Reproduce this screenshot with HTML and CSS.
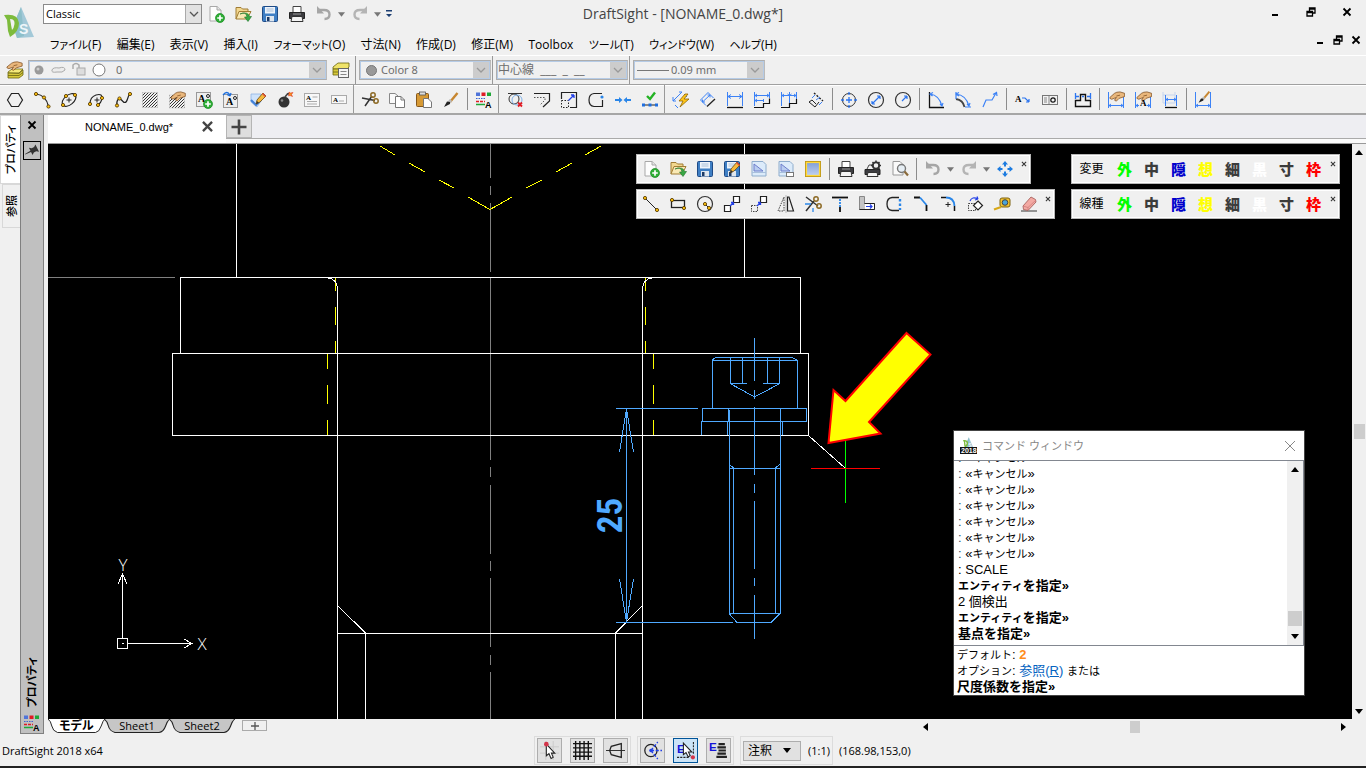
FILE: index.html
```html
<!DOCTYPE html>
<html lang="ja">
<head>
<meta charset="utf-8">
<title>DraftSight - [NONAME_0.dwg*]</title>
<link rel="stylesheet" href="styles.css">
</head>
<body>
<svg class="paints" aria-hidden="true">
  <defs>
    <linearGradient id="g-frame" x1="0" y1="0" x2="0" y2="1"><stop offset="0" stop-color="#7d9bd8"/><stop offset="1" stop-color="#c4d4f0"/></linearGradient>
    <pattern id="p-hatch" width="3" height="3" patternUnits="userSpaceOnUse"><path d="M-1 1L1-1M0 3L3 0M2 4L4 2" stroke="#222" stroke-width="0.9"/></pattern>
  </defs>
</svg>
<svg class="sprite" aria-hidden="true">
  <defs>
    <g id="hand"><path d="M1 7L6 2.500Q8 1 12 1L17 2.500V6L14 7L11 8L8 11L6 10L8 7L3 9L1 8Z" fill="#e9b77c" stroke="#7a4a1c" stroke-width="0.8"/><path d="M8 5.500L12 4.500" stroke="#7a4a1c" stroke-width="0.8"/></g>
    <g id="plus"><circle cx="13" cy="13" r="4.5" fill="#2fae36" stroke="#178a20" stroke-width="0.7"/><path d="M13 10.2V15.8M10.2 13H15.8" stroke="#fff" stroke-width="1.7"/></g>
    <g id="pencil"><path d="M7 13L8 9L14 2L17 5L11 11Z" fill="#f6b93b" stroke="#6b4a12" stroke-width="0.8"/><path d="M14 2L17 5L16 6L13 3Z" fill="#e14b3a"/><path d="M7 13L8 10L10 12Z" fill="#333"/></g>
    <g id="node"><circle r="1.6" fill="#ffc20e" stroke="#5a3d00" stroke-width="0.9"/></g>
  </defs>
  <symbol id="i-new" viewBox="0 0 18 18"><path d="M3 1.5H10L14 5V16H3Z" fill="#fdfdfd" stroke="#a8a8a8"/><path d="M10 1.5V5H14" fill="#e4e4e4" stroke="#a8a8a8"/><use href="#plus"/></symbol>
  <symbol id="i-open" viewBox="0 0 18 18"><path d="M2 14V2.5H7L8.5 4H14V7" fill="#f3d78e" stroke="#a07c34"/><path d="M2 14L5 6.5H17L13 14Z" fill="#f9e9b4" stroke="#a07c34"/><path d="M6 9Q12 6 13 12H10.5L14 16.5L17.5 11.5H15.5Q14 6 6 9Z" fill="#39a845" stroke="#1e7228" stroke-width="0.6"/></symbol>
  <symbol id="i-save" viewBox="0 0 18 18"><rect x="1.5" y="1.5" width="15" height="15" rx="1" fill="#3f7fc4" stroke="#1f4b86"/><rect x="4" y="2" width="10" height="6.5" fill="#eef4fb"/><path d="M5.5 4H12.5M5.5 6H12.5" stroke="#a9bfd8"/><rect x="5" y="11" width="8" height="5.5" fill="#dfe6ee"/><rect x="6" y="12" width="2.5" height="4" fill="#1c3a66"/></symbol>
  <symbol id="i-saveas" viewBox="0 0 18 18"><use href="#i-save" width="18" height="18"/><use href="#pencil"/></symbol>
  <symbol id="i-print" viewBox="0 0 18 18"><path d="M5 7V1.5H13V7" fill="#fff" stroke="#444"/><path d="M1.5 7.5H16.5V13.5H1.5Z" fill="#3c3c40" stroke="#222"/><path d="M4 11.5H14L15 16.5H3Z" fill="#f4f4f4" stroke="#333"/><path d="M5 9H13" stroke="#999"/></symbol>
  <symbol id="i-printset" viewBox="0 0 18 18"><path d="M1 9.5H16V14.5H1Z" fill="#3c3c40" stroke="#222"/><path d="M4 12.5H13L14 16.5H3Z" fill="#f4f4f4" stroke="#333"/><path d="M3 9L5 5H9" fill="none" stroke="#444"/><circle cx="12" cy="5.5" r="3.2" fill="none" stroke="#333" stroke-width="1.8"/><path d="M12 .5V3M12 8V10.5M7 5.5H9.5M14.5 5.5H17M8.5 2L10 3.5M14 7.5L15.5 9M15.5 2L14 3.5" stroke="#333" stroke-width="1.5"/></symbol>
  <symbol id="i-preview" viewBox="0 0 18 18"><path d="M2 1.5H9L12 4.5V15H2Z" fill="#fafafa" stroke="#999"/><circle cx="10.5" cy="8.5" r="4" fill="#e6eef4" stroke="#777" stroke-width="1.4"/><path d="M13.5 11.5L17 15.5" stroke="#8a6a3a" stroke-width="2.2"/></symbol>
  <symbol id="i-undo" viewBox="0 0 18 18"><path d="M4 5H9Q14.500 5 14.500 9.500T9.500 14" fill="none" stroke="#a6a6a6" stroke-width="2.4"/><path d="M2 1V8.500H9Z" fill="#a6a6a6"/></symbol>
  <symbol id="i-redo" viewBox="0 0 18 18"><path d="M14 5H9Q3.500 5 3.500 9.500T8.500 14" fill="none" stroke="#b4b4b4" stroke-width="2.400"/><path d="M16 1V8.500H9Z" fill="#b4b4b4"/></symbol>
  <symbol id="i-drop" viewBox="0 0 8 5"><path d="M0 0H8L4 5Z" fill="#777"/></symbol>
  <symbol id="i-custom" viewBox="0 0 6 8"><path d="M0 0H6V1.500H0ZM0 4H6L3 7Z" fill="#1d3f73"/></symbol>
  <symbol id="i-chev" viewBox="0 0 10 6"><path d="M1 1L5 5L9 1" fill="none" stroke="currentColor" stroke-width="1.300"/></symbol>
  <symbol id="i-x" viewBox="0 0 10 10"><path d="M1.500 1.500L8.500 8.500M8.500 1.500L1.500 8.500" stroke="currentColor" stroke-width="1.800"/></symbol>
  <symbol id="i-min" viewBox="0 0 10 10"><path d="M2 8H8" stroke="#000" stroke-width="2"/></symbol>
  <symbol id="i-restore" viewBox="0 0 10 10"><path d="M3.500 4V1H9V6H7M3.500 2H9" fill="none" stroke="#000" stroke-width="1.300"/><path d="M1 4.500H6.500V9H1ZM1 5.500H6.500" fill="none" stroke="#000" stroke-width="1.300"/></symbol>

  <symbol id="i-layers" viewBox="0 0 18 18"><path d="M2 11L6 8H17L13 12H2Z" fill="#f4ea7b" stroke="#6b6410" stroke-width="0.800"/><path d="M2 12L13 12.500L17 9V14L13 17H2Z" fill="#d6c93c" stroke="#6b6410" stroke-width="0.800"/><path d="M2 14.500H13L17 11.500" fill="none" stroke="#6b6410" stroke-width="0.800"/><g transform="scale(.95 .85)"><use href="#hand"/></g></symbol>
  <symbol id="i-layerstate" viewBox="0 0 18 18"><path d="M1 6L6 2H17V6L15 8H1Z" fill="#efe36a" stroke="#6b6410" stroke-width="0.800"/><path d="M1 8V14H7V8ZM1 11H7" fill="#d6c93c" stroke="#6b6410" stroke-width="0.800"/><rect x="6.500" y="7.500" width="10" height="9" fill="#f6f6f6" stroke="#666"/><path d="M8.500 10.500H14.500M8.500 13.500H14.500" stroke="#888"/></symbol>

  <symbol id="i-polygon" viewBox="0 0 18 18"><path d="M5.500 2.500H12.500L16.500 9L12.500 15.500H5.500L1.500 9Z" fill="none" stroke="#222" stroke-width="1.200"/></symbol>
  <symbol id="i-arc" viewBox="0 0 18 18"><path d="M3 3Q13 4 15.500 15.500" fill="none" stroke="#222" stroke-width="1.200"/><use href="#node" x="3" y="3"/><use href="#node" x="11" y="6.500"/><use href="#node" x="15.500" y="15.500"/></symbol>
  <symbol id="i-ellipse" viewBox="0 0 18 18"><ellipse cx="9" cy="9" rx="8" ry="4.800" transform="rotate(-40 9 9)" fill="none" stroke="#222" stroke-width="1.100"/><path d="M9 6.500V11.500M6.500 9H11.500" stroke="#222"/><use href="#node" x="3" y="14"/><use href="#node" x="15" y="4"/><use href="#node" x="6" y="5"/></symbol>
  <symbol id="i-earc" viewBox="0 0 18 18"><path d="M3 13Q3 6 9 4Q16 2 15 8Q14 12 11 14" fill="none" stroke="#222" stroke-width="1.100"/><path d="M10 6.500V11.500M7.500 9H12.500" stroke="#222"/><use href="#node" x="3" y="13"/><use href="#node" x="15" y="7"/><use href="#node" x="11" y="14"/></symbol>
  <symbol id="i-spline" viewBox="0 0 18 18"><path d="M3 15C2 9 5 6 7.500 9S12 13 13.500 8S15 4 16 3" fill="none" stroke="#222" stroke-width="1.200"/><use href="#node" x="3" y="14.500"/><use href="#node" x="5.500" y="7.500"/><use href="#node" x="16" y="3"/></symbol>
  <symbol id="i-hatch" viewBox="0 0 18 18"><rect x="1.500" y="1.500" width="15" height="15" fill="url(#p-hatch)" stroke="#bbb" stroke-width="0.500"/></symbol>
  <symbol id="i-hatchedit" viewBox="0 0 18 18"><rect x="1.500" y="4" width="15" height="13" fill="url(#p-hatch)" stroke="#bbb" stroke-width="0.500"/><g transform="translate(2 0) scale(.9)"><use href="#hand"/></g></symbol>
  <symbol id="i-note" viewBox="0 0 18 18"><rect x="1.500" y="1.500" width="14" height="14" fill="#eee" stroke="#999"/><text x="3" y="11" class="ic-serif">A</text><circle cx="13" cy="5" r="1.500" fill="none" stroke="#222"/><use href="#plus"/></symbol>
  <symbol id="i-noteedit" viewBox="0 0 18 18"><rect x="1.500" y="3.500" width="14" height="13" fill="#eee" stroke="#999"/><text x="4" y="14" class="ic-serif">A</text><circle cx="13" cy="7" r="1.500" fill="none" stroke="#222"/><path d="M1 4Q5 -1 8 4M8 5L9 2M8 5L5 3.500" fill="none" stroke="#1c6fe0" stroke-width="1.300"/></symbol>
  <symbol id="i-check" viewBox="0 0 18 18"><path d="M2 3H12V10L8 16L2 11Z" fill="#cfe3fb" stroke="#8fb4e4" stroke-width="0.800"/><path d="M2 9L7 14L12 9" fill="none" stroke="#3f7fd8" stroke-width="2"/><use href="#pencil"/></symbol>
  <symbol id="i-bomb" viewBox="0 0 18 18"><circle cx="8" cy="11" r="5.500" fill="#333"/><circle cx="6" cy="9.500" r="1.300" fill="#888"/><path d="M9 6L11 3.500Q12 2 14 3" fill="none" stroke="#444" stroke-width="1.600"/><path d="M13 1L14.500 2L17 1.500L15.500 3.500L16.500 5.500L14 4.500L12.500 5L13 3Z" fill="#f7941d" stroke="#d8201a" stroke-width="0.500"/></symbol>
  <symbol id="i-textbox" viewBox="0 0 18 18"><rect x="1.500" y="2.500" width="15" height="13" fill="#f8f8f8" stroke="#aaa"/><text x="3" y="9" class="ic-tiny">A</text><path d="M9.500 6H14.500M4 10.500H14M4 13H14" stroke="#aaa"/></symbol>
  <symbol id="i-simplenote" viewBox="0 0 18 18"><rect x="1.500" y="4.500" width="15" height="8" fill="#f8f8f8" stroke="#aaa"/><text x="3" y="11" class="ic-tiny">A</text><path d="M9 10H14" stroke="#aaa"/></symbol>
  <symbol id="i-cut" viewBox="0 0 18 18"><path d="M1 7L14 9.500M4 15L11 5" stroke="#333" stroke-width="1.500"/><circle cx="12" cy="4" r="2.200" fill="none" stroke="#8d6a25" stroke-width="1.500"/><circle cx="15" cy="10" r="2.200" fill="none" stroke="#8d6a25" stroke-width="1.500"/></symbol>
  <symbol id="i-copy" viewBox="0 0 18 18"><path d="M1.500 2.500H7L10 5V12.500H1.500Z" fill="#fafafa" stroke="#888"/><path d="M7.500 5.500H13L16.500 9V16.500H7.500Z" fill="#fff" stroke="#777"/><path d="M13 5.500V9H16.500" fill="none" stroke="#777"/></symbol>
  <symbol id="i-paste" viewBox="0 0 18 18"><rect x="1.500" y="2.500" width="12" height="13" rx="1" fill="#d79a35" stroke="#86571a"/><rect x="4.500" y="1" width="6" height="3" fill="#ddd" stroke="#555" stroke-width="0.800"/><path d="M8.500 7.500H13L16.500 11V16.500H8.500Z" fill="#fff" stroke="#777"/></symbol>
  <symbol id="i-brush" viewBox="0 0 18 18"><path d="M15.500 2L8 11" stroke="#c7862f" stroke-width="2.400"/><path d="M9 9L7 11.500" stroke="#bbb" stroke-width="3"/><path d="M8 11L5 10.500L2 16L8 13Z" fill="#222"/></symbol>
  <symbol id="i-props" viewBox="0 0 18 18"><path d="M1 1.500H5V5H1Z" fill="#4f74d9"/><path d="M6.500 1.500H10.500V5H6.500Z" fill="#e01b24"/><path d="M12 1.500H16V5H12Z" fill="#1ea838"/><path d="M1 7.500H10" stroke="#3a63d0" stroke-dasharray="1.500 1"/><path d="M1 10.500H10" stroke="#e01b24" stroke-width="1.500" stroke-dasharray="3 1"/><path d="M1 13.500H10" stroke="#1ea838" stroke-width="1.500"/><text x="10" y="17" class="ic-bold">A</text></symbol>

  <symbol id="i-delcirc" viewBox="0 0 18 18"><path d="M2 2.500H16" stroke="#333"/><circle cx="8" cy="8" r="5" fill="none" stroke="#333"/><circle cx="11" cy="9" r="5" fill="none" stroke="#7fb2ea"/><path d="M12 11.500L16 15.500M16 11.500L12 15.500" stroke="#e01b24" stroke-width="1.800"/></symbol>
  <symbol id="i-offset" viewBox="0 0 18 18"><path d="M1 2.500H16.500V10L10 16" fill="none" stroke="#222" stroke-width="1.200"/><path d="M1 6.500H12V9L7 14" fill="none" stroke="#555" stroke-dasharray="1.500 1.500"/></symbol>
  <symbol id="i-scale" viewBox="0 0 18 18"><path d="M1.500 8V1.500H16.500V16.500H10" fill="none" stroke="#222" stroke-width="1.200"/><rect x="1.500" y="9.500" width="7" height="7" fill="none" stroke="#222" stroke-dasharray="1.500 1.500"/><path d="M8.500 9.500L14 4M14 4H11M14 4V7" stroke="#2340e8" stroke-width="1.300" fill="none"/></symbol>
  <symbol id="i-weld" viewBox="0 0 18 18"><path d="M15 2.500H7Q2 3 2 9T7 15.500H15.500V9" fill="none" stroke="#222" stroke-width="1.200"/><circle cx="15" cy="6" r="1.600" fill="#2a86e8"/></symbol>
  <symbol id="i-join" viewBox="0 0 18 18"><path d="M1 9H6M17 9H12" stroke="#2a86e8" stroke-width="1.800"/><path d="M5 6L8.500 9L5 12ZM13 6L9.500 9L13 12Z" fill="#2a86e8"/></symbol>
  <symbol id="i-verify" viewBox="0 0 18 18"><path d="M6 5L9 8L14 1.500" fill="none" stroke="#24b324" stroke-width="2.400"/><path d="M2 14H17" stroke="#222"/><path d="M1 12.500H4V15.500H1ZM7.500 12.500H10.500V15.500H7.500ZM14 12.500H17V15.500H14Z" fill="#1f6fe0"/></symbol>

  <symbol id="i-dimsmart" viewBox="0 0 18 18"><path d="M1 10L10 1M1 10V6M1 10H4M10 1H7M3 14L6 17M12 3L15 6" stroke="#3c82f6" fill="none"/><path d="M13 3L7 10H11L8 16L17 8H12L16 3Z" fill="#ffc61a" stroke="#8f6500" stroke-width="0.800"/></symbol>
  <symbol id="i-dimalign" viewBox="0 0 18 18"><path d="M1.500 9L9 1.500M1.500 9L7 14.500M9 1.500L14.500 7M3.500 11L11 4M3.500 11V8.500M3.500 11H6M11 4H8.500M11 4V6.500" stroke="#3c82f6" fill="none"/><path d="M8 15.500L16 8" stroke="#222" stroke-width="1.300"/></symbol>
  <symbol id="i-dimlin" viewBox="0 0 18 18"><path d="M1.500 1V15M16.500 1V15M2 5.500H16M5 3.500L2 5.500L5 7.500M13 3.500L16 5.500L13 7.500" stroke="#3c82f6" fill="none"/><path d="M1 16.500H17" stroke="#111" stroke-width="1.300"/></symbol>
  <symbol id="i-dimbase" viewBox="0 0 18 18"><path d="M1.500 1V15M16.500 1V7M10.500 8V11M2 4.500H16M4 3L2 4.500L4 6M14 3L16 4.500L14 6M2 9.500H10M4 8L2 9.500L4 11" stroke="#3c82f6" fill="none"/><path d="M1 16.500H10.500V12.500H16.500V7.500" stroke="#111" stroke-width="1.200" fill="none"/></symbol>
  <symbol id="i-dimcont" viewBox="0 0 18 18"><path d="M1.500 1V15M9.500 1V12M16.500 1V11M2 4.500H16M4 3L2 4.500L4 6M14 3L16 4.500L14 6M11.500 3L9.500 4.500L7.500 3" stroke="#3c82f6" fill="none"/><path d="M1 16.500H9.500V12.500H16.500V8" stroke="#111" stroke-width="1.200" fill="none"/></symbol>
  <symbol id="i-dimord" viewBox="0 0 18 18"><path d="M7 2L16 10" stroke="#222" stroke-width="1.400" stroke-dasharray="2 1.500"/><path d="M2 11L8 16L12 11M2 11L5 9L9 13" fill="none" stroke="#222"/><path d="M5 7L8 4M9 9L13 6M12 14L15 11" stroke="#3c82f6"/></symbol>

  <symbol id="i-center" viewBox="0 0 18 18"><circle cx="9" cy="9" r="6.500" fill="none" stroke="#333"/><path d="M9 6V12M6 9H12M9 1V4M9 14V17M1 9H4M14 9H17" stroke="#2b74f0" stroke-width="1.300"/></symbol>
  <symbol id="i-dia" viewBox="0 0 18 18"><circle cx="9" cy="9" r="7.500" fill="none" stroke="#333" stroke-width="1.200"/><path d="M5 13L13 5M13 5H10M13 5V8M5 13V10M5 13H8" stroke="#2b74f0" fill="none" stroke-width="1.200"/></symbol>
  <symbol id="i-rad" viewBox="0 0 18 18"><circle cx="9" cy="9" r="7.500" fill="none" stroke="#333" stroke-width="1.200"/><path d="M8 10L13 5M13 5H10M13 5V8" stroke="#2b74f0" fill="none" stroke-width="1.200"/></symbol>
  <symbol id="i-ang" viewBox="0 0 18 18"><path d="M2.500 1V16.500H17" fill="none" stroke="#111" stroke-width="1.300"/><path d="M3 3Q12 4 15 15M6 1.500L3 3L5.500 5M13 13L15 15L16 12" fill="none" stroke="#3c82f6" stroke-width="1.200"/></symbol>
  <symbol id="i-arclen" viewBox="0 0 18 18"><path d="M2 8Q9 9 10.500 16" fill="none" stroke="#444" stroke-width="1.800"/><path d="M2 8V1M11 16H17M2 3Q12 4 15 15M5 1.500L2 3L5 5M13 13L15 15L16 12" fill="none" stroke="#3c82f6" stroke-width="1.200"/></symbol>
  <symbol id="i-jog" viewBox="0 0 18 18"><path d="M2 16L5 9H11L15 2M12 3.500L15.500 1.500L16 5" fill="none" stroke="#3c82f6" stroke-width="1.200"/></symbol>
  <symbol id="i-leader" viewBox="0 0 18 18"><text x="1" y="11" class="ic-mini">A</text><path d="M8 7H11L15 11M15 11H12M15 11V8" fill="none" stroke="#2b74f0" stroke-width="1.200"/></symbol>
  <symbol id="i-tol" viewBox="0 0 18 18"><rect x="1.500" y="4.500" width="15" height="9" fill="#f2f2f2" stroke="#777"/><path d="M3 7H6M3 9H6M3 11H6M8 5V13" stroke="#888"/><circle cx="12" cy="9" r="2.200" fill="none" stroke="#111" stroke-width="1.200"/></symbol>
  <symbol id="i-break" viewBox="0 0 18 18"><path d="M1.500 9.500H6.500V3.500H11.500V9.500H16.500V15.500H1.500Z" fill="none" stroke="#111" stroke-width="1.400"/><path d="M1.500 2V8M16.500 2V8M2 5.500H5M16 5.500H13M8 5.500H10" stroke="#2b74f0" stroke-width="1.300"/></symbol>
  <symbol id="i-dimedit" viewBox="0 0 18 18"><path d="M1.500 1V17M16.500 6V17M2 14.500H16M4 13L2 14.500L4 16M14 13L16 14.500L14 16" stroke="#3c82f6" fill="none"/><g transform="translate(2 0) scale(.92)"><use href="#hand"/></g></symbol>
  <symbol id="i-dimtext" viewBox="0 0 18 18"><path d="M1.500 1V17M16.500 6V17M2 14.500H5M16 14.500H13M4 13L2 14.500L4 16M14 13L16 14.500L14 16" stroke="#3c82f6" fill="none"/><g transform="translate(2 0) scale(.92)"><use href="#hand"/></g><text x="6" y="15" class="ic-mini">A</text></symbol>
  <symbol id="i-dimupd" viewBox="0 0 18 18"><path d="M2 1V12H14V1M2 4H14" stroke="#c4d4ee" fill="none"/><path d="M4.500 4V15M15.500 4V15M5 8.500H15M7 7L5 8.500L7 10M13 7L15 8.500L13 10" stroke="#3c82f6" fill="none"/><path d="M4 16.500H16" stroke="#111" stroke-width="1.300"/></symbol>
  <symbol id="i-dimstyle" viewBox="0 0 18 18"><path d="M1.500 1V17M16.500 1V17M2 14.500H16M4 13L2 14.500L4 16M14 13L16 14.500L14 16" stroke="#3c82f6" fill="none"/><g transform="translate(3 -1) scale(.8)"><use href="#i-brush" width="18" height="18"/></g></symbol>

  <symbol id="i-tpl" viewBox="0 0 18 18"><path d="M2 1.500H13L16 4.500V16H2Z" fill="#dcebfa" stroke="#8eaccc"/><path d="M2 12.500H16" stroke="#a8c0dc"/><path d="M4 4V11H13Z" fill="#b9cdf0" stroke="#6e7ecb"/></symbol>
  <symbol id="i-tpl2" viewBox="0 0 18 18"><use href="#i-tpl" width="18" height="18"/><rect x="9.500" y="12.500" width="7" height="4" fill="#fff" stroke="#777"/></symbol>
  <symbol id="i-frame" viewBox="0 0 18 18"><rect x="1.500" y="1.500" width="15" height="15" fill="url(#g-frame)" stroke="#c09a1a"/><rect x="2.500" y="2.500" width="13" height="13" fill="none" stroke="#ffd83d" stroke-width="1.200"/></symbol>
  <symbol id="i-move" viewBox="0 0 18 18"><path d="M9 1L12 4.500H10V6.500H8V4.500H6ZM9 17L6 13.500H8V11.500H10V13.500H12ZM1 9L4.500 6V8H6.500V10H4.500V12ZM17 9L13.500 12V10H11.500V8H13.500V6Z" fill="#1c7be0"/></symbol>

  <symbol id="i-line" viewBox="0 0 18 18"><path d="M3 3L15 15" stroke="#222"/><use href="#node" x="3" y="3"/><use href="#node" x="15" y="15"/></symbol>
  <symbol id="i-rect" viewBox="0 0 18 18"><rect x="2.500" y="5.500" width="13" height="7" fill="none" stroke="#222" stroke-width="1.300"/><use href="#node" x="3" y="5"/><use href="#node" x="15" y="13"/></symbol>
  <symbol id="i-circle" viewBox="0 0 18 18"><circle cx="9" cy="9" r="7.500" fill="none" stroke="#333" stroke-width="1.200"/><path d="M9 9L13 13" stroke="#222"/><use href="#node" x="9" y="9"/><use href="#node" x="13" y="13"/></symbol>
  <symbol id="i-mv" viewBox="0 0 18 18"><path d="M1.500 10.500H7.500V16.500H1.500ZM10.500 1.500H16.500V7.500H10.500Z" fill="#fff" stroke="#222" stroke-width="1.200"/><path d="M7 11L10.500 7.500M10.500 7.500H8M10.500 7.500V10" stroke="#2340e8" stroke-width="1.300" fill="none"/></symbol>
  <symbol id="i-cp" viewBox="0 0 18 18"><path d="M1.500 10.500H7.500V16.500H1.500Z" fill="none" stroke="#444" stroke-dasharray="1.500 1"/><path d="M10.500 1.500H16.500V7.500H10.500Z" fill="#fff" stroke="#222" stroke-width="1.200"/><path d="M7 11L10.500 7.500M10.500 7.500H8M10.500 7.500V10" stroke="#2340e8" stroke-width="1.300" fill="none"/></symbol>
  <symbol id="i-mirror" viewBox="0 0 18 18"><path d="M7 2V16H1Z" fill="none" stroke="#444" stroke-dasharray="1.500 1"/><path d="M10.500 2H12L16.500 16H10.500Z" fill="none" stroke="#222" stroke-width="1.200"/><path d="M9 0V18" stroke="#999" stroke-width="0.600"/></symbol>
  <symbol id="i-split" viewBox="0 0 18 18"><path d="M2 2L14 11M2 16L10 6" stroke="#333" stroke-width="1.500"/><path d="M1 9H7M9 13V17" stroke="#2a86e8" stroke-width="1.300"/><circle cx="12" cy="4" r="2.200" fill="none" stroke="#8d6a25" stroke-width="1.500"/><circle cx="15" cy="11" r="2.200" fill="none" stroke="#8d6a25" stroke-width="1.500"/></symbol>
  <symbol id="i-trim" viewBox="0 0 18 18"><path d="M1 2.500H17" stroke="#111" stroke-width="1.800"/><path d="M9 4V12" stroke="#2a86e8" stroke-width="1.800" stroke-dasharray="2 1"/><path d="M9 12V17" stroke="#111" stroke-width="1.800"/></symbol>
  <symbol id="i-stretch" viewBox="0 0 18 18"><path d="M1.500 1.500H6.500V8.500H16.500V14.500H1.500Z" fill="#c4c4c4" stroke="#888"/><path d="M6.500 8.500H16.500V14.500H1.500" fill="none" stroke="#222"/><path d="M7 9H16V14H7Z" fill="#fff"/><path d="M8 11.500H14M12 9.500L14 11.500L12 13.500" fill="none" stroke="#2340e8" stroke-width="1.200"/></symbol>
  <symbol id="i-fil2" viewBox="0 0 18 18"><path d="M14 2.500H7Q2 3 2 9T7 15.500H14" fill="none" stroke="#222" stroke-width="1.300"/><path d="M15 4V15" stroke="#2a86e8" stroke-width="2.400" stroke-dasharray="2.500 2"/></symbol>
  <symbol id="i-chamfer" viewBox="0 0 18 18"><path d="M2 2.500H8M14.500 10V16" stroke="#111" stroke-width="1.800"/><path d="M8 2.500L14.500 10" stroke="#2a86e8" stroke-width="1.800"/></symbol>
  <symbol id="i-fillet" viewBox="0 0 18 18"><path d="M2 2.500H7M15.500 11V16" stroke="#111" stroke-width="1.500"/><path d="M7 2.500Q15 2.500 15.500 11" fill="none" stroke="#2a86e8" stroke-width="1.800"/><path d="M9 7V12M6.500 9.500H11.500" stroke="#222"/></symbol>
  <symbol id="i-rotate" viewBox="0 0 18 18"><rect x="2.500" y="8.500" width="7" height="7" fill="none" stroke="#444" stroke-dasharray="1.500 1"/><path d="M12 6L16.500 10.500L12 15L7.500 10.500Z" fill="#fff" stroke="#222" stroke-width="1.200"/><path d="M4 6Q6 1 12 4M12 4L11 1.500M12 4L9 5" stroke="#2340e8" stroke-width="1.200" fill="none"/></symbol>
  <symbol id="i-measure" viewBox="0 0 18 18"><rect x="7" y="3" width="10" height="9" rx="2" fill="#f2c230" stroke="#7d6210"/><circle cx="12" cy="7.500" r="2.800" fill="#4aa3d8" stroke="#444"/><path d="M8 12L1 14.500" stroke="#d8a818" stroke-width="2.200"/></symbol>
  <symbol id="i-erase" viewBox="0 0 18 18"><path d="M1 16H17" stroke="#888" stroke-width="1.800"/><path d="M3 11L11 2L15.500 4.500L16 7L8 15.500L3.500 14.500Z" fill="#f3a9a3" stroke="#a8625e" stroke-width="0.900"/><path d="M3 11L8 12.500L16 5M8 12.500V15" fill="none" stroke="#c77" stroke-width="0.700"/></symbol>

  <symbol id="i-snap" viewBox="0 0 18 18"><path d="M0 5.500H18M0 11.500H18M5.500 0V18M12.500 0V18" stroke="#c9c9c9" stroke-width="0.800"/><path d="M6 3V14L8.500 12L10.500 16.500L12.500 15.500L10.800 11.500H14Z" fill="#fff" stroke="#222"/><circle cx="6" cy="3" r="2.200" fill="#d3354a"/></symbol>
  <symbol id="i-grid" viewBox="0 0 18 18"><path d="M2.500 0V18M6.500 0V18M10.500 0V18M14.500 0V18M0 2.500H18M0 6.500H18M0 10.500H18M0 14.500H18" stroke="#111" stroke-width="1.300"/></symbol>
  <symbol id="i-ortho" viewBox="0 0 18 18"><path d="M0 9H18" stroke="#333"/><path d="M14.500 2.500V15.500L5 13L3.500 9L5 5Z" fill="none" stroke="#222" stroke-width="1.200"/></symbol>
  <symbol id="i-polar" viewBox="0 0 18 18"><circle cx="7.500" cy="9" r="5.800" fill="none" stroke="#222" stroke-width="1.200"/><path d="M7.500 9L14 1M7.500 9L14 17M7.500 9H18" stroke="#2340e8" stroke-dasharray="3 1.500" stroke-width="1.300"/><circle cx="7.500" cy="9" r="1.600" fill="#2340e8"/></symbol>
  <symbol id="i-esnap" viewBox="0 0 18 18"><path d="M1 15.500H13M16.500 1V12" stroke="#222" stroke-dasharray="2 1"/><text x="1" y="11" class="ic-e">E</text><path d="M7 2V13L9.500 11L11.500 15L13.500 14L11.800 10.500H15Z" fill="#fff" stroke="#222"/><circle cx="16" cy="15.500" r="2" fill="#d3354a"/></symbol>
  <symbol id="i-etrack" viewBox="0 0 18 18"><text x="0" y="9" class="ic-e">E</text><path d="M9 3H15M8 6H16M9 9H16M8 12H16M7 15H17" stroke="#222" stroke-width="2"/></symbol>
  <symbol id="logo" viewBox="0 0 32 34"><path d="M17 1L30 31L13 32L9 20Z" fill="#a3c9d8"/><path d="M17 1L20 30L13 32L9 20Z" fill="#8dbfca"/><path d="M0 9Q14 7 15 17Q15 26 6 31L4 25L3 14Z" fill="#7dbb3c"/><path d="M6 13Q11 13 10.500 18Q10 22 8 24Z" fill="#f0f0f0"/><text x="15" y="28" class="logo-s">S</text></symbol>
  <symbol id="pin" viewBox="0 0 16 16"><path d="M9 1L15 7L12 7.500L10 9.500L9.500 12.500L7 10L2 14.500L1.500 14L6 9L3.500 6.500L6.500 6L8.500 4Z" fill="#333" transform="rotate(18 8 8)"/></symbol>
</svg>

<header class="app-head">
  <svg class="logo" aria-hidden="true"><use href="#logo"/></svg>
  <div class="titlebar">
    <div class="quick">
      <label class="combo workspace"><select aria-label="Workspace"><option>Classic</option></select><span class="arrow"><svg><use href="#i-chev"/></svg></span></label>
      <button class="tool" aria-label="新規"><svg><use href="#i-new"/></svg></button>
      <button class="tool" aria-label="開く"><svg><use href="#i-open"/></svg></button>
      <button class="tool" aria-label="保存"><svg><use href="#i-save"/></svg></button>
      <button class="tool" aria-label="印刷"><svg><use href="#i-print"/></svg></button>
      <button class="tool" aria-label="元に戻す"><svg><use href="#i-undo"/></svg></button>
      <button class="drop" aria-label="履歴"><svg><use href="#i-drop"/></svg></button>
      <button class="tool" aria-label="やり直し"><svg><use href="#i-redo"/></svg></button>
      <button class="drop" aria-label="履歴"><svg><use href="#i-drop"/></svg></button>
      <button class="drop custom" aria-label="カスタマイズ"><svg><use href="#i-custom"/></svg></button>
    </div>
    <h1>DraftSight - [NONAME_0.dwg*]</h1>
    <div class="win main-win">
      <button aria-label="最小化"><svg><use href="#i-min"/></svg></button>
      <button aria-label="元に戻す"><svg><use href="#i-restore"/></svg></button>
      <button aria-label="閉じる"><svg><use href="#i-x"/></svg></button>
    </div>
  </div>
  <div class="menubar">
    <nav>
      <button><span class="kana">ファイル</span>(F)</button><button>編集(E)</button><button>表示(V)</button><button>挿入(I)</button><button><span class="kana">フォーマット</span>(O)</button><button>寸法(N)</button><button>作成(D)</button><button>修正(M)</button><button>Toolbox</button><button><span class="kana">ツール</span>(T)</button><button><span class="kana">ウィンドウ</span>(W)</button><button><span class="kana">ヘルプ</span>(H)</button>
    </nav>
    <div class="win">
      <button aria-label="最小化"><svg><use href="#i-min"/></svg></button>
      <button aria-label="元に戻す"><svg><use href="#i-restore"/></svg></button>
      <button aria-label="閉じる"><svg><use href="#i-x"/></svg></button>
    </div>
  </div>
</header>

<div class="bar layer-bar">
  <button class="tool" aria-label="画層"><svg><use href="#i-layers"/></svg></button>
  <label class="combo off layer"><svg class="states" viewBox="0 0 76 18"><circle cx="9" cy="9" r="4.500" fill="#9a9a9a"/><circle cx="8" cy="8" r="1.500" fill="#ccc"/><path d="M22 9Q23 6 29 7Q35 5 35 9Q33 12 27 11Q21 12 22 9Z" fill="#ececec" stroke="#aaa"/><path d="M43 8V4Q46 1 49 4V7" fill="none" stroke="#aaa" stroke-width="1.500"/><rect x="47" y="7" width="8" height="7" fill="#ddd" stroke="#aaa"/><circle cx="69" cy="9" r="6" fill="#fff" stroke="#777"/></svg><select aria-label="画層"><option>0</option></select><span class="arrow"><svg><use href="#i-chev"/></svg></span></label>
  <button class="tool" aria-label="画層状態"><svg><use href="#i-layerstate"/></svg></button>
  <span class="edge"></span>
  <label class="combo off"><span class="dot"></span><select aria-label="線の色"><option>Color 8</option></select><span class="arrow"><svg><use href="#i-chev"/></svg></span></label>
  <span class="edge"></span>
  <label class="combo off linetype"><select aria-label="線種"><option>中心線&nbsp; ___ &nbsp;_ &nbsp;__</option></select><span class="arrow"><svg><use href="#i-chev"/></svg></span></label>
  <span class="edge"></span>
  <label class="combo off"><span class="rule"></span><select aria-label="線幅"><option>0.09 mm</option></select><span class="arrow"><svg><use href="#i-chev"/></svg></span></label>
</div>

<div class="bar draw-bar">
  <button class="tool" aria-label="多角形"><svg><use href="#i-polygon"/></svg></button>
  <button class="tool" aria-label="円弧"><svg><use href="#i-arc"/></svg></button>
  <button class="tool" aria-label="楕円"><svg><use href="#i-ellipse"/></svg></button>
  <button class="tool" aria-label="楕円弧"><svg><use href="#i-earc"/></svg></button>
  <button class="tool" aria-label="スプライン"><svg><use href="#i-spline"/></svg></button>
  <button class="tool" aria-label="ハッチング"><svg><use href="#i-hatch"/></svg></button>
  <button class="tool" aria-label="ハッチング編集"><svg><use href="#i-hatchedit"/></svg></button>
  <button class="tool" aria-label="注釈"><svg><use href="#i-note"/></svg></button>
  <button class="tool" aria-label="注釈編集"><svg><use href="#i-noteedit"/></svg></button>
  <button class="tool" aria-label="確認"><svg><use href="#i-check"/></svg></button>
  <button class="tool" aria-label="分解"><svg><use href="#i-bomb"/></svg></button>
  <button class="tool" aria-label="テキスト"><svg><use href="#i-textbox"/></svg></button>
  <button class="tool" aria-label="簡易注釈"><svg><use href="#i-simplenote"/></svg></button>
  <span class="edge"></span>
  <button class="tool" aria-label="切り取り"><svg><use href="#i-cut"/></svg></button>
  <button class="tool" aria-label="コピー"><svg><use href="#i-copy"/></svg></button>
  <button class="tool" aria-label="貼り付け"><svg><use href="#i-paste"/></svg></button>
  <button class="tool" aria-label="プロパティ ペインタ"><svg><use href="#i-brush"/></svg></button>
  <span class="sep"></span>
  <button class="tool" aria-label="プロパティ"><svg><use href="#i-props"/></svg></button>
  <span class="edge"></span>
  <button class="tool" aria-label="重複削除"><svg><use href="#i-delcirc"/></svg></button>
  <button class="tool" aria-label="オフセット"><svg><use href="#i-offset"/></svg></button>
  <button class="tool" aria-label="尺度"><svg><use href="#i-scale"/></svg></button>
  <button class="tool" aria-label="分割"><svg><use href="#i-weld"/></svg></button>
  <button class="tool" aria-label="結合"><svg><use href="#i-join"/></svg></button>
  <button class="tool" aria-label="検証"><svg><use href="#i-verify"/></svg></button>
  <span class="edge"></span>
  <button class="tool" aria-label="スマート寸法"><svg><use href="#i-dimsmart"/></svg></button>
  <button class="tool" aria-label="平行寸法"><svg><use href="#i-dimalign"/></svg></button>
  <button class="tool" aria-label="長さ寸法"><svg><use href="#i-dimlin"/></svg></button>
  <button class="tool" aria-label="並列寸法"><svg><use href="#i-dimbase"/></svg></button>
  <button class="tool" aria-label="直列寸法"><svg><use href="#i-dimcont"/></svg></button>
  <button class="tool" aria-label="座標寸法"><svg><use href="#i-dimord"/></svg></button>
  <span class="sep"></span>
  <button class="tool" aria-label="中心マーク"><svg><use href="#i-center"/></svg></button>
  <button class="tool" aria-label="直径"><svg><use href="#i-dia"/></svg></button>
  <button class="tool" aria-label="半径"><svg><use href="#i-rad"/></svg></button>
  <span class="sep"></span>
  <button class="tool" aria-label="角度"><svg><use href="#i-ang"/></svg></button>
  <button class="tool" aria-label="弧長"><svg><use href="#i-arclen"/></svg></button>
  <button class="tool" aria-label="折り曲げ"><svg><use href="#i-jog"/></svg></button>
  <span class="sep"></span>
  <button class="tool" aria-label="引出線"><svg><use href="#i-leader"/></svg></button>
  <button class="tool" aria-label="公差"><svg><use href="#i-tol"/></svg></button>
  <span class="sep"></span>
  <button class="tool" aria-label="寸法線分割"><svg><use href="#i-break"/></svg></button>
  <span class="sep"></span>
  <button class="tool" aria-label="寸法編集"><svg><use href="#i-dimedit"/></svg></button>
  <button class="tool" aria-label="寸法文字編集"><svg><use href="#i-dimtext"/></svg></button>
  <button class="tool" aria-label="寸法更新"><svg><use href="#i-dimupd"/></svg></button>
  <span class="sep"></span>
  <button class="tool" aria-label="寸法スタイル"><svg><use href="#i-dimstyle"/></svg></button>
</div>

<main class="work">
  <aside class="side-tabs">
    <button class="active"><span class="vert">プロパティ</span></button>
    <button><span class="vert">参照</span></button>
  </aside>
  <aside class="dock">
    <button class="dock-x" aria-label="閉じる"><svg><use href="#i-x"/></svg></button>
    <button class="dock-pin" aria-label="固定"><svg><use href="#pin"/></svg></button>
    <span class="vert dock-title">プロパティ</span>
    <svg class="dock-icon" aria-hidden="true"><use href="#i-props"/></svg>
  </aside>
  <section class="doc">
    <div class="doc-tabs">
      <div class="doc-tab"><span>NONAME_0.dwg*</span><button aria-label="閉じる"><svg><use href="#i-x"/></svg></button></div>
      <button class="doc-add" aria-label="新規"><svg viewBox="0 0 18 18"><path d="M9 1.500V16.500M1.500 9H16.500" stroke="#444" stroke-width="2.600"/></svg></button>
    </div>
    <div class="view">
      <div class="canvas">
        <svg class="drawing" viewBox="48 144 1304 575" preserveAspectRatio="xMinYMin slice" role="img" aria-label="図面">
          <g class="gray"><path d="M48 277.500H175"/><path d="M490.500 144V178M490.500 186V195M490.500 203V272M490.500 278V460M490.500 467V477M490.500 485V554M490.500 561V571M490.500 578V647M490.500 655V665M490.500 672V719"/></g>
          <g class="yellow">
            <path d="M380 146L395 155M409 163L425 172M439 180L454 188M468 197L490 209.500L512 197M526 188L542 180M556 172L572 163M585 155L601 146"/>
            <path d="M335.500 278V291M335.500 307V325M335.500 341V353M645.500 278V291M645.500 307V325M645.500 341V353M327.500 354V369M327.500 385V404M327.500 420V435M653.500 354V369M653.500 385V404M653.500 420V435"/>
          </g>
          <g class="white">
            <path d="M236.500 144V277M744.500 144V277M180.500 353V277.500H800.500V353M172.500 353.500H808.500V435.500H172.500Z"/>
            <path d="M328 278Q337.500 279 337.500 290V719M652 278Q642.500 279 642.500 290V719"/>
            <path d="M338 606L365.500 633V719M642 606L615.500 633V719M337 633.500H642M809 436L845 468"/>
            <path d="M117.500 638.500H127.500V648.500H117.500ZM122.500 638V575M118 584L122.500 574L127 584M128 643.500H192M184 639L192 643.500L184 648M122 643.500H124"/>
          </g>
          <text class="axis" x="123" y="571">Y</text><text class="axis" x="202" y="650">X</text>
          <g class="blue">
            <path d="M616 408.500H698M616 622.500H733M626.500 408V622M619.500 452L626.500 409L633.500 452M619.500 579L626.500 622L633.500 579"/>
            <path d="M712.500 408V360.500H797.500V408M712 360L716 357.500H792L797 360M730.500 358V383.500H747M742.500 358V383M767.500 358V383M779.500 358V383.500H763M731 384L754.500 397L779 384"/>
            <path d="M702.500 408.500H806.500V421.500H702.500ZM728.500 409V421M701.500 421V435M727.500 421V435M782.500 421V435"/>
            <path d="M729.500 410V614L737 622.500H771L780.500 613V408M729 468.500H780M729 464L733.500 468V613M780 464L775.500 468V613M729 613.500H780"/>
            <path d="M754.500 338V381M754.500 390V399M754.500 407V475M754.500 484V493M754.500 501V569M754.500 578V586M754.500 595V639"/>
          </g>
          <text class="dim" transform="translate(622 515.500) rotate(-90)">25</text>
          <path class="green" d="M845.500 440V503"/><path class="red" d="M811 468.500H880"/>
          <path class="pointer" d="M906.500 333L930.500 354.500L869 422L880.500 433.500L828.500 443L833.500 390L845.500 401Z"/>
        </svg>

        <div class="float std">
          <button class="tool" aria-label="新規"><svg><use href="#i-new"/></svg></button>
          <button class="tool" aria-label="開く"><svg><use href="#i-open"/></svg></button>
          <button class="tool" aria-label="保存"><svg><use href="#i-save"/></svg></button>
          <button class="tool" aria-label="名前を付けて保存"><svg><use href="#i-saveas"/></svg></button>
          <button class="tool" aria-label="テンプレート"><svg><use href="#i-tpl"/></svg></button>
          <button class="tool" aria-label="テンプレート保存"><svg><use href="#i-tpl2"/></svg></button>
          <button class="tool" aria-label="枠"><svg><use href="#i-frame"/></svg></button>
          <span class="sep"></span>
          <button class="tool" aria-label="印刷"><svg><use href="#i-print"/></svg></button>
          <button class="tool" aria-label="印刷設定"><svg><use href="#i-printset"/></svg></button>
          <button class="tool" aria-label="プレビュー"><svg><use href="#i-preview"/></svg></button>
          <span class="sep"></span>
          <button class="tool" aria-label="元に戻す"><svg><use href="#i-undo"/></svg></button>
          <button class="drop" aria-label="履歴"><svg><use href="#i-drop"/></svg></button>
          <button class="tool" aria-label="やり直し"><svg><use href="#i-redo"/></svg></button>
          <button class="drop" aria-label="履歴"><svg><use href="#i-drop"/></svg></button>
          <button class="tool" aria-label="画面移動"><svg><use href="#i-move"/></svg></button>
          <button class="mini-x" aria-label="閉じる"><svg><use href="#i-x"/></svg></button>
        </div>
        <div class="float edit">
          <button class="tool" aria-label="線分"><svg><use href="#i-line"/></svg></button>
          <button class="tool" aria-label="四角形"><svg><use href="#i-rect"/></svg></button>
          <button class="tool" aria-label="円"><svg><use href="#i-circle"/></svg></button>
          <button class="tool" aria-label="移動"><svg><use href="#i-mv"/></svg></button>
          <button class="tool" aria-label="コピー"><svg><use href="#i-cp"/></svg></button>
          <button class="tool" aria-label="鏡像"><svg><use href="#i-mirror"/></svg></button>
          <button class="tool" aria-label="パワートリム"><svg><use href="#i-split"/></svg></button>
          <button class="tool" aria-label="トリム"><svg><use href="#i-trim"/></svg></button>
          <button class="tool" aria-label="ストレッチ"><svg><use href="#i-stretch"/></svg></button>
          <button class="tool" aria-label="分割"><svg><use href="#i-fil2"/></svg></button>
          <button class="tool" aria-label="面取り"><svg><use href="#i-chamfer"/></svg></button>
          <button class="tool" aria-label="フィレット"><svg><use href="#i-fillet"/></svg></button>
          <button class="tool" aria-label="回転"><svg><use href="#i-rotate"/></svg></button>
          <button class="tool" aria-label="計測"><svg><use href="#i-measure"/></svg></button>
          <button class="tool" aria-label="削除"><svg><use href="#i-erase"/></svg></button>
          <button class="mini-x" aria-label="閉じる"><svg><use href="#i-x"/></svg></button>
        </div>
        <div class="float pal pal-change">
          <button class="name">変更</button><button class="tool k-green">外</button><button class="tool">中</button><button class="tool k-blue">隠</button><button class="tool k-yellow">想</button><button class="tool">細</button><button class="tool k-white">黒</button><button class="tool">寸</button><button class="tool k-red">枠</button><button class="mini-x" aria-label="閉じる"><svg><use href="#i-x"/></svg></button>
        </div>
        <div class="float pal pal-type">
          <button class="name">線種</button><button class="tool k-green">外</button><button class="tool">中</button><button class="tool k-blue">隠</button><button class="tool k-yellow">想</button><button class="tool">細</button><button class="tool k-white">黒</button><button class="tool">寸</button><button class="tool k-red">枠</button><button class="mini-x" aria-label="閉じる"><svg><use href="#i-x"/></svg></button>
        </div>

        <section class="command">
          <header><svg class="cmd-icon" viewBox="0 0 18 18" aria-hidden="true"><svg x="2" y="0" width="13" height="12"><use href="#logo"/></svg><rect x="0" y="10" width="17" height="7" fill="#111"/><text x="1" y="16" class="ic-year">2018</text></svg><h2>コマンド ウィンドウ</h2><button aria-label="閉じる"><svg viewBox="0 0 12 12"><path d="M1 1L11 11M11 1L1 11" stroke="#888"/></svg></button></header>
          <div class="log">
            <div class="lines">
              <p><i>:</i> «<span class="kana">キャンセル</span>»</p><p><i>:</i> «<span class="kana">キャンセル</span>»</p><p><i>:</i> «<span class="kana">キャンセル</span>»</p><p><i>:</i> «<span class="kana">キャンセル</span>»</p><p><i>:</i> «<span class="kana">キャンセル</span>»</p><p><i>:</i> «<span class="kana">キャンセル</span>»</p><p><i>:</i> «<span class="kana">キャンセル</span>»</p><p>: SCALE</p><p><b><span class="kana">エンティティ</span>を指定»</b></p><p>2 個検出</p><p><b><span class="kana">エンティティ</span>を指定»</b></p><p><b>基点を指定»</b></p>
            </div>
            <div class="vbar"><span class="up"></span><span class="thumb"></span><span class="down"></span></div>
          </div>
          <div class="prompt">
            <p><span class="kana">デフォルト</span>: <b class="orange">2</b></p><p><span class="kana">オプション</span>: <a href="#ref">参照(<u>R</u>)</a> <span class="kana">または</span></p><p><b>尺度係数を指定»</b></p>
          </div>
        </section>
      </div>
      <div class="vscroll"><span class="up"></span><span class="thumb"></span><span class="down"></span></div>
    </div>
    <div class="sheets">
      <button class="sheet active"><svg viewBox="0 0 60 14" preserveAspectRatio="none"><path d="M0 0Q3 2 4 7T10 13.500H50Q54 13 56 7T60 0"/></svg><span>モデル</span></button>
      <button class="sheet"><svg viewBox="0 0 60 14" preserveAspectRatio="none"><path d="M0 0Q3 2 4 7T10 13.500H50Q54 13 56 7T60 0"/></svg><span>Sheet1</span></button>
      <button class="sheet"><svg viewBox="0 0 60 14" preserveAspectRatio="none"><path d="M0 0Q3 2 4 7T10 13.500H50Q54 13 56 7T60 0"/></svg><span>Sheet2</span></button>
      <button class="sheet-add" aria-label="シート追加"><svg viewBox="0 0 8 8"><path d="M4 0V8M0 4H8" stroke="#555" stroke-width="1.300"/></svg></button>
      <div class="hscroll"><span class="left"></span><span class="thumb"></span><span class="right"></span></div>
    </div>
  </section>
</main>

<footer class="status">
  <span class="version">DraftSight 2018 x64</span>
  <div class="group">
    <button class="mode" aria-label="スナップ"><svg><use href="#i-snap"/></svg></button>
    <button class="mode" aria-label="グリッド"><svg><use href="#i-grid"/></svg></button>
    <button class="mode" aria-label="直交"><svg><use href="#i-ortho"/></svg></button>
  </div>
  <div class="group">
    <button class="mode" aria-label="円形状"><svg><use href="#i-polar"/></svg></button>
    <button class="mode on" aria-label="Eスナップ"><svg><use href="#i-esnap"/></svg></button>
    <button class="mode" aria-label="Eトラック"><svg><use href="#i-etrack"/></svg></button>
  </div>
  <div class="group notes">
    <label class="note-combo"><select aria-label="注釈"><option>注釈</option></select><span class="down"></span></label>
    <span>(1:1)</span>
  </div>
  <span class="coords">(168.98,153,0)</span>
</footer>
</body>
</html>
```
FILE: styles.css
```css
* { box-sizing: border-box; }
body {
  margin: 0;
  height: 100vh;
  display: flex;
  flex-direction: column;
  overflow: hidden;
  background: #f0f0f0;
  color: #000;
  font: 12px/16px "Open Sans", "Noto Sans CJK JP", sans-serif;
  font-feature-settings: "palt";
}
button, select { font: inherit; color: inherit; background: none; border: 0; padding: 0; margin: 0; font-feature-settings: inherit; }
button { display: flex; align-items: center; justify-content: center; flex: none; white-space: nowrap; }
h1, h2, p { margin: 0; font-weight: normal; }
svg { display: block; flex: none; }
.sprite { display: none; }
.paints { position: absolute; width: 0; height: 0; }
.kana { font-size: 11px; }
.ic-serif { font: bold 10px "Liberation Serif", serif; }
.ic-mini { font: bold 9px "Liberation Serif", serif; }
.ic-tiny { font: bold 7px "Liberation Serif", serif; }
.ic-bold { font: bold 9px "Liberation Sans", sans-serif; }
.ic-e { font: bold 11px "Liberation Sans", sans-serif; fill: #1414d8; }
.ic-year { font: bold 7px "Liberation Sans", sans-serif; fill: #fff; }
.logo-s { font: bold 14px "Liberation Sans", sans-serif; fill: #eef6fa; }

/* Title and menu */
.app-head { position: relative; border-bottom: 1px solid #fff; }
.logo { position: absolute; left: 4px; top: 6px; width: 32px; height: 34px; }
.titlebar { display: flex; align-items: center; height: 28px; padding-left: 43px; }
.titlebar h1 { font-size: 14px; line-height: 20px; color: #444; }
.quick { flex: 1 1 0; display: flex; align-items: center; }
.main-win { flex: 1 1 43px; }
.win { display: flex; justify-content: flex-end; align-items: center; padding-right: 1px; }
.win svg { width: 10px; height: 10px; }
.win button { width: 18px; height: 18px; }
.main-win { padding: 0 10px 4px 0; gap: 18px; }
.menubar { display: flex; justify-content: space-between; height: 27px; padding-left: 50px; }
.menubar nav { width: 727px; display: flex; justify-content: space-between; align-items: center; padding-top: 6px; }
.menubar button { align-items: baseline; }
.menubar .win { padding-bottom: 4px; }
.menubar .win button { align-items: center; }

.tool { width: 27px; height: 27px; }
.tool svg { width: 18px; height: 18px; }
.drop { width: 9px; height: 27px; }
.drop svg { width: 7px; height: 5px; }
.quick .custom { width: 14px; }
.custom svg { width: 6px; height: 8px; }
.sep { flex: none; width: 6px; height: 22px; background: linear-gradient(#8c8c8c, #8c8c8c) center / 1px 100% no-repeat; }
.edge { flex: none; width: 4px; height: 100%; background: linear-gradient(#999, #999) 1px 0 / 1px 100% no-repeat; }

.combo { display: flex; align-items: center; height: 20px; width: 132px; border: 1px solid #8a8a8a; background: #fff; }
.combo select { flex: 1; min-width: 0; height: 18px; appearance: none; padding-left: 2px; font-size: 11px; }
.combo .arrow { flex: none; width: 16px; height: 18px; display: grid; place-items: center; background: #e2e2e2; color: #555; border-left: 1px solid #aaa; }
.combo .arrow svg { width: 10px; height: 6px; }
.workspace { width: 159px; }
.combo.off { border: 2px solid #adadad; border-right-color: #bbb; background: #f0f0f0; color: #6d6d6d; outline: 1px solid #b5cbe6; outline-offset: -2px; }
.combo.off select { height: 16px; font-family: "Noto Sans", "Noto Sans CJK JP", sans-serif; color: #6d6d6d; opacity: 1; }
.combo.off .arrow { height: 16px; background: #ccc; border: 0; color: #999; }
.combo.linetype select { font-size: 12px; padding-left: 0; }
.combo.layer { width: 299px; }
.states { width: 76px; height: 18px; margin-right: 8px; }
.dot { width: 11px; height: 11px; border-radius: 50%; background: #999; border: 1px solid #777; margin: 0 2px 0 5px; }
.rule { width: 32px; height: 1px; background: #777; margin-left: 2px; }

.bar { display: flex; align-items: center; flex: none; padding-left: 1px; }
.layer-bar { height: 28px; }
.layer-bar .edge { width: 5px; background-position: 1px 0; }
.draw-bar { height: 31px; border-top: 1px solid #a0a0a0; border-bottom: 2px solid #a6a6a6; box-shadow: inset 0 1px #fff; }
.draw-bar .tool { padding-top: 1px; }

/* Work area */
.work { flex: 1; min-height: 0; display: flex; }
.side-tabs { width: 20px; display: flex; flex-direction: column; padding-bottom: 2px; }
.side-tabs button { width: 18px; height: 44px; margin-left: 2px; border: 1px solid #d8d8d8; border-right: 0; }
.side-tabs .active { width: 20px; height: 69px; margin: 0; background: #fff; }
.vert { writing-mode: vertical-rl; text-orientation: sideways; transform: rotate(180deg); font-size: 11px; }
.side-tabs .vert { font-weight: 500; }
.dock { width: 24px; display: flex; flex-direction: column; align-items: center; background: #c0c0c0; border: 1px solid #808080; border-top: 0; padding-bottom: 1px; margin-bottom: 1px; }
.dock button { width: 18px; height: 19px; }
.dock-x svg { width: 10px; height: 10px; }
.dock .dock-pin { margin-top: 7px; border: 1px solid #000; }
.dock-pin svg { width: 15px; height: 15px; }
.dock-title { margin-top: auto; font-weight: 600; margin-bottom: 6px; }
.dock-icon { width: 18px; height: 18px; }
.doc { flex: 1; min-width: 0; display: flex; flex-direction: column; padding-left: 4px; }
.doc-tabs { display: flex; flex: none; height: 29px; background: linear-gradient(#eeeef2 0 23px, #aaa 23px 24px, #fafafa 24px 28px, #999 28px 29px); }
.doc-tab { display: flex; align-items: center; justify-content: space-between; width: 178px; height: 28px; background: #fff; padding: 0 12px 5px 37px; }
.doc-tab span { font: 11px/16px "Liberation Sans", sans-serif; }
.doc-tab button { width: 14px; height: 14px; color: #444; }
.doc-tab svg { width: 13px; height: 13px; }
.doc-add { width: 26px; height: 23px; background: #dedede; border: 1px solid #b5b5b5; }
.doc-add svg { width: 18px; height: 18px; }
.view { flex: 1; min-height: 0; display: flex; }
.canvas { position: relative; flex: 1; min-width: 0; background: #000; overflow: hidden; }
.drawing { position: absolute; left: 0; top: 0; width: 100%; height: 100%; shape-rendering: crispEdges; }
.drawing g { fill: none; stroke-width: 1; }
.gray { stroke: #808080; }
.yellow { stroke: #ff0; }
.white { stroke: #fff; }
.blue { stroke: #4fa9ff; }
.green { stroke: #0f0; }
.red { stroke: #f00; }
.axis { fill: #fff; font: 300 17px "Open Sans", sans-serif; text-anchor: middle; }
.dim { fill: #4fa9ff; font: bold 35px "Liberation Sans Narrow", "Roboto Condensed", sans-serif; text-anchor: middle; }
.pointer { fill: #ff0; stroke: #f00; stroke-width: 2; shape-rendering: auto; }

/* Floating toolbars */
.float { position: absolute; display: flex; align-items: center; height: 30px; background: #f0f0f0; border: 1px solid #b8b8b8; box-shadow: inset 0 0 0 1px #fff; }
.float .mini-x { align-self: flex-start; width: 12px; height: 17px; }
.mini-x svg { width: 6px; height: 6px; color: #333; }
.std { left: 588px; top: 10px; }
.edit { left: 588px; top: 45px; }
.pal { left: 1023px; width: 269px; color: #3c3c3c; }
.pal-change { top: 10px; }
.pal-type { top: 45px; }
.pal .name { width: 39px; color: #000; }
.pal .tool { font: 900 15px/20px "Noto Sans CJK JP", sans-serif; }
.pal .k-green { color: #0f0; }
.pal .k-blue { color: #00c; }
.pal .k-yellow { color: #ff0; }
.pal .k-white { color: #fff; }
.pal .k-red { color: #f00; }

/* Command window */
.command { position: absolute; left: 905px; top: 286px; width: 352px; background: #fff; border: 1px solid #444; font: 13px/16px "Liberation Sans", "Noto Sans CJK JP", sans-serif; }
.command header { display: flex; align-items: center; height: 29px; padding: 0 8px 0 6px; }
.cmd-icon { width: 18px; height: 18px; }
.command h2 { flex: 1; font-size: 11px; color: #888; padding-left: 4px; }
.command header button svg { width: 12px; height: 12px; }
.log { display: flex; height: 186px; border: 1px solid #828790; border-left: 0; }
.lines { flex: 1; display: flex; flex-direction: column; justify-content: flex-end; overflow: hidden; padding: 0 0 3px 4px; }
.lines p, .prompt p { flex: none; height: 16px; font-size: 13px; white-space: nowrap; }
.lines i { color: #33536e; font-style: normal; }
.prompt { padding: 1px 0 0 3px; }
.orange { color: #ff8c1a; }
.command a { color: #0563c1; text-decoration: none; }
.command .vbar { width: 16px; padding: 6px 0; }

/* Scroll bars */
.vbar, .vscroll { display: flex; flex-direction: column; align-items: center; background: #f0f0f0; }
.vscroll { width: 14px; padding: 6px 0 5px; }
.up, .down { flex: none; width: 0; border: 4px solid transparent; }
.up { border-top: 0; border-bottom: 5px solid #000; }
.down { border-bottom: 0; border-top: 5px solid #000; }
.thumb { background: #cdcdcd; }
.vscroll .thumb { width: 11px; height: 15px; margin: 269px 0 auto; }
.vbar .thumb { width: 14px; height: 15px; margin: auto 0 8px; }
.left, .right { width: 0; height: 0; border: 4px solid transparent; }
.left { border-left: 0; border-right: 5px solid #000; }
.right { border-right: 0; border-left: 5px solid #000; }

/* Sheets */
.sheets { display: flex; flex: none; height: 16px; align-items: flex-start; }
.sheet { position: relative; width: 66px; height: 14px; margin-right: -1px; font-size: 11px; }
.sheet.active { width: 57px; font-size: 12px; font-weight: bold; z-index: 1; }
.sheet svg { position: absolute; left: 0; top: 0; width: 100%; height: 14px; fill: #c6c6c6; stroke: #222; }
.sheet.active svg { fill: #fff; }
.sheet span { position: relative; line-height: 14px; }
.sheet-add { width: 25px; height: 11px; margin: 1px 0 0 8px; border: 1px solid #aaa; }
.sheet-add svg { width: 8px; height: 8px; }
.hscroll { flex: 1; display: flex; justify-content: space-between; align-items: center; height: 16px; margin-left: 656px; padding-right: 20px; }
.hscroll .thumb { width: 10px; height: 12px; }

/* Status */
.status { flex: none; display: flex; align-items: center; height: 33px; border-bottom: 2px solid #222; padding-left: 2px; font-size: 11px; }
.version { width: 532px; }
.group { display: flex; align-items: center; gap: 8px; height: 29px; border: 1px solid #dcdcdc; padding: 0 2px; margin-right: 6px; }
.mode { width: 25px; height: 25px; background: #e1e1e1; border: 1px solid #adadad; }
.mode svg { width: 19px; height: 19px; }
.mode.on { background: #cce4f7; border: 1px solid #005499; }
.notes { gap: 7px; }
.note-combo { display: flex; align-items: center; width: 58px; height: 20px; background: #e1e1e1; border: 1px solid #adadad; padding: 0 9px 0 4px; font-size: 12px; }
.note-combo select { flex: 1; min-width: 0; appearance: none; }
```
